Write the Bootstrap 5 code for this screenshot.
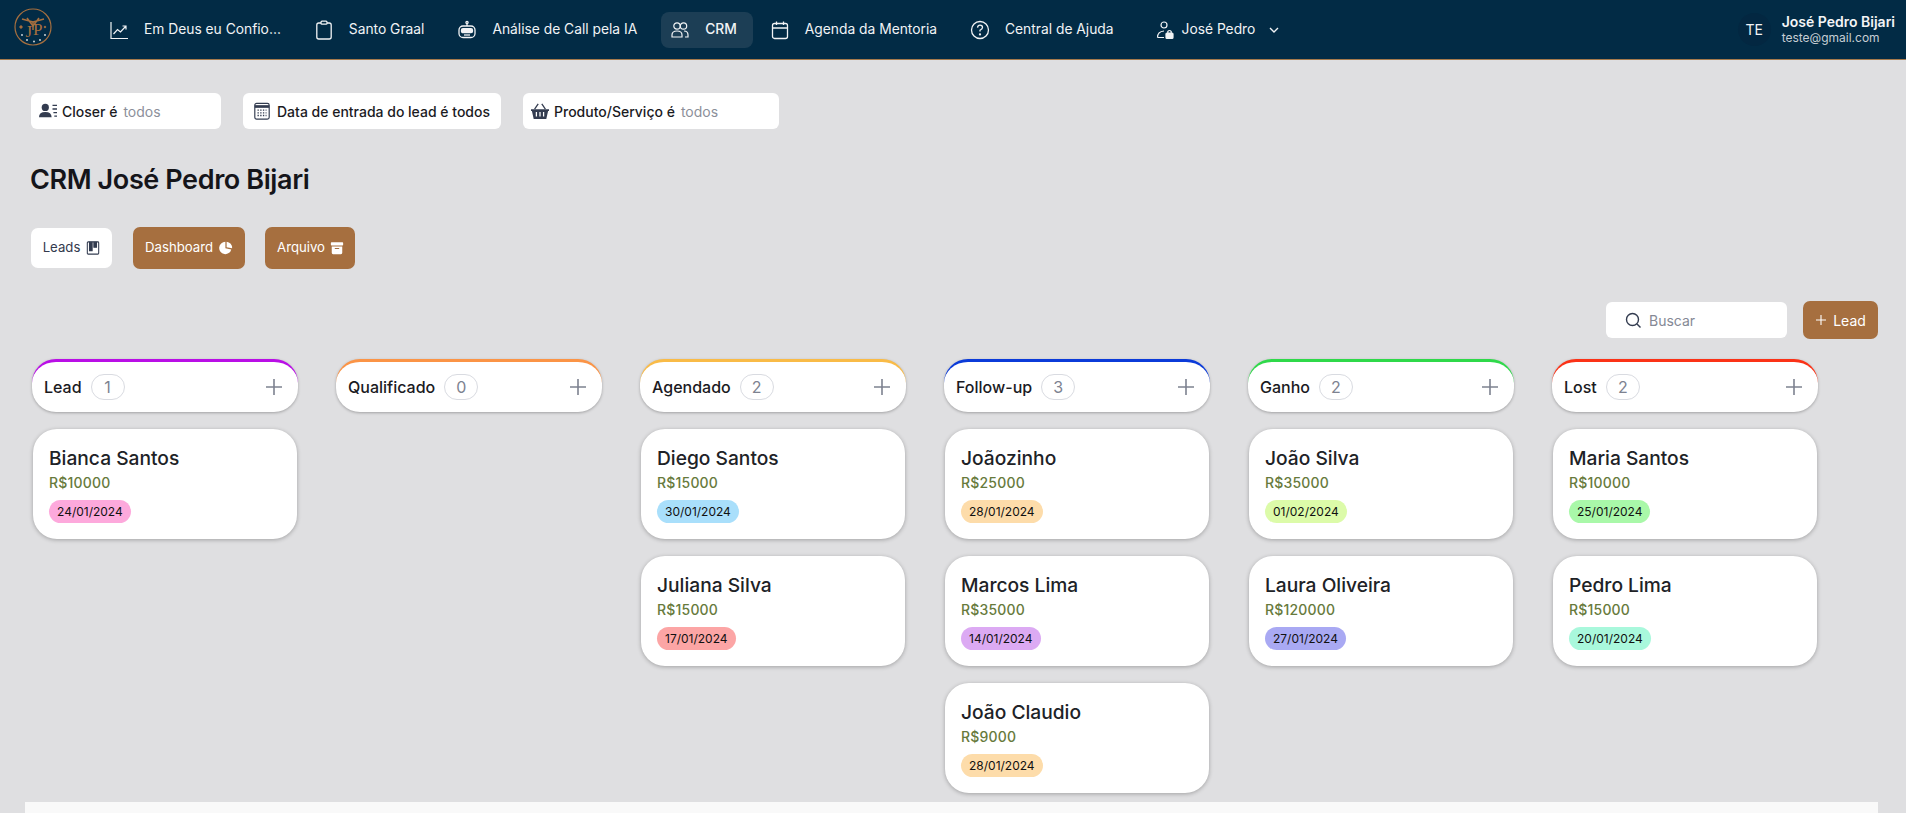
<!DOCTYPE html>
<html lang="pt-BR">
<head>
  <meta charset="UTF-8">
  <meta name="viewport" content="width=device-width, initial-scale=1.0">
  <title>CRM</title>
  <link rel="stylesheet" href="https://cdn.jsdelivr.net/npm/bootstrap@5.3.0/dist/css/bootstrap.min.css">
  <style>
    html, body { height: 813px; overflow: hidden; }
    body { background: #dfdfe1; font-family: Inter, "Liberation Sans", sans-serif; color: #1b1b1f; font-size: 14px; }
    .topbar { height: 60px; background: #022b45; border-bottom: 1px solid #a67a4c; padding-left: 14px; }
    .logo-box { width: 38px; height: 38px; margin: 0 48px 5px 0; flex: none; }
    .logo-letter { font-family: "Liberation Serif", serif; font-size: 17px; fill: #a66f3f; }
    .top-nav { gap: 8px; }
    .top-link { height: 36px; color: #f1f3f5; font-size: 13.8px; padding: 0 16px 0 9px; border-radius: 8px; gap: 15px; white-space: nowrap; text-decoration: none; }
    .top-link:hover { color: #fff; }
    .top-link svg { width: 20px; height: 20px; flex: none; }
    .top-link.is-on { background: #1c3e55; font-weight: 500; }
    .top-link.user-link { gap: 7px; margin-left: 8px; }
    .top-link svg.chev-ico { width: 14px; height: 14px; margin-left: 5px; }
    .initials { width: 33px; height: 33px; background: #032741; color: #f1f3f5; font-size: 14px; border-radius: 50%; margin-right: 11px; }
    .who-box { padding-right: 11px; }
    .who-name { font-size: 14px; font-weight: 600; line-height: 16px; color: #f4f5f6; }
    .who-mail { font-size: 12px; line-height: 16px; color: #c6ced4; }
    .main-area { padding: 33px 0 0 31px; }
    .filter-row { gap: 22px; }
    .filter-box { height: 36px; background: #fff; border-radius: 6px; padding: 0 8px; font-size: 14px; font-weight: 500; gap: 5px; white-space: nowrap; }
    .filter-box svg { width: 18px; height: 18px; flex: none; }
    .filter-box svg.wide-ico { width: 20px; margin-left: 1px; }
    .filter-closer { width: 190px; }
    .filter-date { width: 258px; }
    .filter-prod { width: 256px; }
    .muted-val { color: #8c8f9a; font-weight: 400; margin-left: 1px; }
    .page-title { font-size: 27px; font-weight: 600; letter-spacing: -.4px; margin: 33px 0 0 -1px; line-height: 36px; color: #15151a; }
    .tab-row { margin-top: 29px; gap: 20px; }
    .tab-btn { border: 0; height: 42px; padding: 0 12px; border-radius: 7px; font-size: 13.2px; background: #a66f3f; color: #fff; gap: 6px; }
    .tab-btn svg { width: 14px; height: 14px; }
    .tab-btn.is-white { background: #fff; color: #333a4d; width: 81px; height: 40px; padding: 0; margin-right: 1px; justify-content: center; }
    .tab-btn.tab-tight { width: 90px; padding: 0 0 0 12px; gap: 5px; }
    .tools { height: 38px; margin-top: 32px; padding-right: 28px; gap: 16px; }
    .search-box { width: 181px; height: 36px; background: #fff; border-radius: 6px; padding-left: 19px; gap: 7px; color: #858995; }
    .search-box svg { width: 17px; height: 17px; }
    .add-btn { border: 0; width: 75px; height: 38px; background: #a66f3f; color: #fff; border-radius: 7px; font-size: 14px; gap: 6px; }
    .add-btn svg { width: 12px; height: 12px; }
    .lanes { margin: 20px 0 0 1px; gap: 38px; height: 434px; }
    .lane { width: 266px; flex: none; }
    .lane-head { height: 53px; border-radius: 24px; background: #fff; border-top: 3px solid; padding: 0 14px 0 12px; box-shadow: 0 1px 3px rgba(0,0,0,.28); font-weight: 500; font-size: 16px; gap: 9px; }
    .count-pill { width: 34px; height: 26px; border: 1px solid #d9dbe1; border-radius: 13px; color: #7d8290; font-size: 16px; font-weight: 400; }
    .plus-ico { width: 20px; height: 20px; margin-left: auto; }
    .deal { width: 264px; height: 110px; margin: 17px 0 0 1px; background: #fff; border-radius: 24px; padding: 17px 16px; box-shadow: 0 1px 4px rgba(0,0,0,.28); }
    .deal-name { font-size: 19.2px; font-weight: 500; line-height: 24px; color: #202226; }
    .deal-price { font-size: 14px; font-weight: 500; line-height: 20px; margin-top: 3px; color: #677a3c; letter-spacing: .2px; }
    .deal-date { display: inline-block; margin-top: 7px; height: 23px; line-height: 23px; padding: 0 8px; border-radius: 12px; font-size: 12px; color: #111; }
    .bottom-panel { height: 11px; margin: 9px 28px 0 25px; background: #f9f9f9; }
  </style>
</head>
<body>
  <nav class="topbar d-flex align-items-center">
    <svg class="logo-box" viewBox="0 0 38 38" fill="none" stroke="#a66f3f">
      <circle cx="19" cy="19" r="18" stroke-width="1.2"/>
      <path d="M8 11 L19 14 L30 11 M13 10 L19 18 L25 10" stroke-width="1.5"/>
      <path d="M19 14 V22" stroke-width="1.5"/>
      <text class="logo-letter" x="11.5" y="29" stroke="none">J</text>
      <text class="logo-letter" x="19" y="27" stroke="none">P</text>
      <circle cx="7" cy="19" r="1.2" fill="#a66f3f"/><circle cx="31" cy="19" r=".8" fill="#a66f3f"/>
      <circle cx="8" cy="27" r=".9" fill="#dfe3e6" stroke="none"/><circle cx="13" cy="32" r=".9" fill="#dfe3e6" stroke="none"/><circle cx="20" cy="33.5" r=".9" fill="#dfe3e6" stroke="none"/><circle cx="26" cy="32" r=".9" fill="#dfe3e6" stroke="none"/><circle cx="31" cy="27" r=".9" fill="#dfe3e6" stroke="none"/>
    </svg>
    <div class="top-nav d-flex align-items-center">
      <a class="top-link d-flex align-items-center" href="#">
        <svg viewBox="0 0 20 20" fill="none" stroke="#f1f3f5" stroke-width="1.2"><path d="M2 2 V18.5 H19"/><path d="M4.5 14 L8.5 9.5 L11.5 12 L17 6 M13.5 6 H17 V9.5"/></svg>Em Deus eu Confio…</a>
      <a class="top-link d-flex align-items-center" href="#">
        <svg viewBox="0 0 20 20" fill="none" stroke="#f1f3f5" stroke-width="1.3"><rect x="2.8" y="3" width="14.4" height="16" rx="2"/><rect x="7" y="1.2" width="6" height="3" rx="1" fill="#022b45"/></svg>Santo Graal</a>
      <a class="top-link d-flex align-items-center" href="#">
        <svg viewBox="0 0 20 20" fill="none" stroke="#f1f3f5" stroke-width="1.3"><circle cx="10" cy="2.5" r="1.1"/><path d="M10 3.5 V6"/><rect x="2" y="6" width="16" height="11.5" rx="4"/><rect x="4.5" y="8.7" width="11" height="4" rx="1.5" fill="#f1f3f5"/><path d="M7 15 H13"/></svg>Análise de Call pela IA</a>
      <a class="top-link is-on d-flex align-items-center" href="#">
        <svg viewBox="0 0 20 20" fill="none" stroke="#f1f3f5" stroke-width="1.2"><circle cx="7" cy="6" r="3.2"/><circle cx="13.5" cy="6" r="3.2"/><path d="M2 17 V15 Q2 11 7 11 Q12 11 12 15 V17 Z M14 11 Q18 11 18 15 V17 H15"/></svg>CRM</a>
      <a class="top-link d-flex align-items-center" href="#">
        <svg viewBox="0 0 20 20" fill="none" stroke="#f1f3f5" stroke-width="1.3"><rect x="2.5" y="3.5" width="15" height="15" rx="2"/><path d="M2.5 8 H17.5 M6.5 1.5 V5 M13.5 1.5 V5"/></svg>Agenda da Mentoria</a>
      <a class="top-link d-flex align-items-center" href="#">
        <svg viewBox="0 0 20 20" fill="none" stroke="#f1f3f5" stroke-width="1.3"><circle cx="10" cy="10" r="8.5"/><path d="M7.5 7.6 Q7.8 5.2 10 5.2 Q12.5 5.2 12.5 7.4 Q12.5 8.8 10 10.2 V11.6"/><circle cx="10" cy="14.4" r=".5"/></svg>Central de Ajuda</a>
      <a class="top-link user-link d-flex align-items-center" href="#">
        <svg viewBox="0 0 20 20" fill="none" stroke="#f1f3f5" stroke-width="1.2"><circle cx="9" cy="5" r="3"/><path d="M2.5 17.5 Q2.5 11.5 9 11 M2.5 17.5 H9"/><rect x="11" y="13" width="7" height="5.5" rx="1" fill="#f1f3f5"/><path d="M12.8 13 V11.5 Q14.5 9.5 16.2 11.5 V13"/></svg>José Pedro
        <svg class="chev-ico" viewBox="0 0 14 14" fill="none" stroke="#f1f3f5" stroke-width="1.4"><path d="M3 5 L7 9 L11 5"/></svg></a>
    </div>
    <div class="who-box ms-auto d-flex align-items-center">
      <div class="initials d-flex align-items-center justify-content-center">TE</div>
      <div><div class="who-name">José Pedro Bijari</div><div class="who-mail">teste@gmail.com</div></div>
    </div>
  </nav>

  <div class="main-area">
    <div class="filter-row d-flex">
      <div class="filter-box filter-closer d-flex align-items-center">
        <svg viewBox="0 0 20 20" fill="#333c50"><circle cx="7" cy="6" r="4"/><path d="M0 17 Q0 11 7 11 Q14 11 14 17 Z"/><path d="M15 3 H20 V4.5 H15 Z M15 7 H20 V8.5 H15 Z M16 11 H20 V12.5 H16 Z M17 15 H20 V16.5 H17 Z"/></svg>
        <span>Closer é</span> <span class="muted-val">todos</span>
      </div>
      <div class="filter-box filter-date d-flex align-items-center">
        <svg class="wide-ico" viewBox="0 0 20 20" fill="none" stroke="#333c50" stroke-width="1.3"><rect x="2" y="1.5" width="16" height="17.5" rx="2"/><path d="M2 5 H18" stroke-width="3"/><path d="M5 9 H15 M5 12 H15 M5 15 H15" stroke-width="1.5" stroke-dasharray="1.5 1.5"/></svg>
        <span>Data de entrada do lead é todos</span>
      </div>
      <div class="filter-box filter-prod d-flex align-items-center">
        <svg viewBox="0 0 20 20" fill="#333c50"><path d="M0 8 H20 V10 H19 L17 19 H3 L1 10 H0 Z"/><path d="M4 8 L8 2 M16 8 L12 2" stroke="#333c50" stroke-width="1.4"/><path d="M6 11 V16 M10 11 V16 M14 11 V16" stroke="#fff" stroke-width="1.4"/></svg>
        <span>Produto/Serviço é</span> <span class="muted-val">todos</span>
      </div>
    </div>

    <h1 class="page-title">CRM José Pedro Bijari</h1>

    <div class="tab-row d-flex align-items-center">
      <button class="tab-btn is-white d-flex align-items-center">Leads
        <svg viewBox="0 0 16 16" fill="none" stroke="#333c50" stroke-width="1.2"><rect x="1.5" y="1" width="13" height="14" rx="1"/><path d="M4 1.5 V11 H7 V1.5 Z M9 1.5 V7 H12 V1.5 Z" fill="#333c50"/></svg></button>
      <button class="tab-btn d-flex align-items-center">Dashboard
        <svg viewBox="0 0 16 16" fill="#fff"><path d="M7.3 1 A7 7 0 1 0 14 9.6 L7.3 8.2 Z"/><path d="M8.7 0.8 A7 7 0 0 1 15 8.2 L8.7 7 Z"/></svg></button>
      <button class="tab-btn tab-tight d-flex align-items-center">Arquivo
        <svg viewBox="0 0 16 16" fill="#fff"><rect x="1" y="1.5" width="14" height="3.5" rx=".8"/><path d="M2 6.2 H14 V13.5 Q14 15 12.5 15 H3.5 Q2 15 2 13.5 Z M5.5 8 V9.2 H10.5 V8 Z" fill-rule="evenodd"/></svg></button>
    </div>

    <div class="tools d-flex align-items-center justify-content-end">
      <div class="search-box d-flex align-items-center">
        <svg viewBox="0 0 17 17" fill="none" stroke="#333c50" stroke-width="1.4"><circle cx="7.5" cy="7.5" r="6"/><path d="M12 12 L15.5 15.5"/></svg>Buscar
      </div>
      <button class="add-btn d-flex align-items-center justify-content-center">
        <svg viewBox="0 0 12 12" stroke="#fff" stroke-width="1.1"><path d="M6 1 V11 M1 6 H11"/></svg>Lead</button>
    </div>

    <div id="lanes" class="lanes d-flex"></div>
  </div>

  <div class="bottom-panel"></div>

  <script>
    const lanes = [
      { name: "Lead", color: "#b90ee6", deals: [["Bianca Santos", "10000", "24/01/2024", "#fda9dc"]] },
      { name: "Qualificado", color: "#fb9446", deals: [] },
      { name: "Agendado", color: "#f9bb47", deals: [["Diego Santos", "15000", "30/01/2024", "#a9dffb"], ["Juliana Silva", "15000", "17/01/2024", "#fca5a5"]] },
      { name: "Follow-up", color: "#0b3bd9", deals: [["Joãozinho", "25000", "28/01/2024", "#fddcaa"], ["Marcos Lima", "35000", "14/01/2024", "#dcaaf3"], ["João Claudio", "9000", "28/01/2024", "#fddcaa"]] },
      { name: "Ganho", color: "#2fd94a", deals: [["João Silva", "35000", "01/02/2024", "#dcfba9"], ["Laura Oliveira", "120000", "27/01/2024", "#a9a9f3"]] },
      { name: "Lost", color: "#fb3217", deals: [["Maria Santos", "10000", "25/01/2024", "#a9f8a9"], ["Pedro Lima", "15000", "20/01/2024", "#a9f8dc"]] }
    ];
    document.getElementById("lanes").innerHTML = lanes.map(l => `
      <div class="lane">
        <div class="lane-head d-flex align-items-center" style="border-top-color:${l.color}">
          <span>${l.name}</span>
          <span class="count-pill d-flex align-items-center justify-content-center">${l.deals.length}</span>
          <svg class="plus-ico" viewBox="0 0 20 20" stroke="#7d8290" stroke-width="1.6"><path d="M10 2 V18 M2 10 H18"/></svg>
        </div>
        ${l.deals.map(d => `
          <div class="deal">
            <div class="deal-name">${d[0]}</div>
            <div class="deal-price">R$${d[1]}</div>
            <span class="deal-date" style="background:${d[3]}">${d[2]}</span>
          </div>`).join("")}
      </div>`).join("");
  </script>
  <script src="https://cdn.jsdelivr.net/npm/bootstrap@5.3.0/dist/js/bootstrap.bundle.min.js"></script>
</body>
</html>
